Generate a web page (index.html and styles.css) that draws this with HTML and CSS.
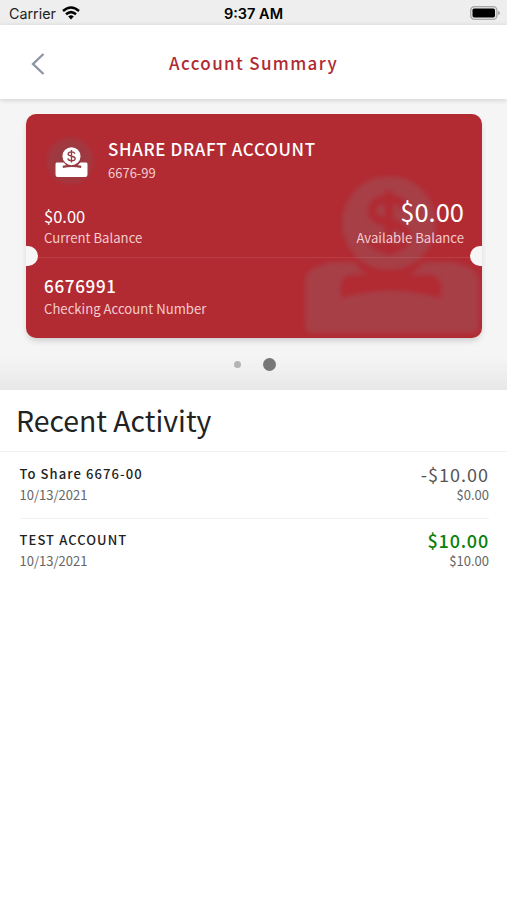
FILE: index.html
```html
<!DOCTYPE html>
<html lang="en">
<head>
<meta charset="utf-8">
<meta name="viewport" content="width=device-width, initial-scale=1">
<title>Account Summary</title>
<link rel="stylesheet" href="styles.css">
</head>
<body>
<header class="status">
  <div class="carrier"><span>Carrier</span>
    <svg class="wifi" viewBox="0 0 18 14" fill="none" stroke="#000" stroke-width="2.5"><path d="M1 5Q9-2 17 5M4 8.3q5-4.3 10 0"/><path d="M6.2 10.5q2.8-2.4 5.6 0L9 13.6z" fill="#000" stroke="none"/></svg>
  </div>
  <div class="time">9:37 AM</div>
  <svg class="battery" viewBox="0 0 30 14"><rect x=".7" y=".7" width="26.2" height="12.6" rx="3.6" fill="#e4e4e4" stroke="#a8a8a8" stroke-width="1.3"/><rect x="2.5" y="2.5" width="22.5" height="9" rx="1.8"/><path d="M28 4.8q2 1 2 2.2t-2 2.2z" fill="#a8a8a8"/></svg>
</header>
<nav class="header">
  <svg class="back" viewBox="0 0 14 22" fill="none" stroke="#8b94a5" stroke-width="2.3"><path d="M12.5 1 2 11l10.500 10"/></svg>
  <h1>Account Summary</h1>
</nav>
<section class="carousel">
  <article class="card">
    <svg class="watermark" viewBox="0 0 174 158">
      <circle cx="84" cy="46" r="47"/>
      <path class="cut" d="M84 14v64M101 32q-4-10-17-10c-11 0-17 5-17 12 0 8 8 10 17 12s18 5 18 13-8 13-18 13-17-4-18-12" stroke-width="8"/>
      <path d="M50 85H28C10 88 0 94 0 104v44q0 8 8 8h158q8 0 8-8v-44c0-10-10-16-28-19h-28q-7 10-16 13h25q9 3 9 11v12q-52-15-100 0v-12q0-8 9-11h19q-9-4-14-13z"/>
    </svg>
    <div class="top">
      <div class="head">
        <div class="badge"><svg viewBox="0 0 34 32"><path d="M1.500 16H9q2 3 5 4h7q3-1 5-4h6.500q1 0 1 2v10q0 3-3 3h-27q-3 0-3-3V18q0-2 1-2z"/><path class="cut" d="M8 20.500q9.500-2 19 0" stroke-width="2.200"/><circle cx="17" cy="9.500" r="9.300"/><path class="cut" d="M17 3v13M20.500 7q-.7-2-3.500-2c-2 0-3.500.8-3.500 2.300 0 3.200 7.300 1.200 7.300 4.500 0 1.500-1.700 2.400-3.800 2.400-2.300 0-3.500-1-3.800-2.400" stroke-width="1.400"/></svg></div>
        <div>
          <h2>SHARE DRAFT ACCOUNT</h2>
          <div class="suffix">6676-99</div>
        </div>
      </div>
      <div class="balances">
        <div><div class="current">$0.00</div><div class="label">Current Balance</div></div>
        <div class="right"><div class="available">$0.00</div><div class="label">Available Balance</div></div>
      </div>
    </div>
    <div class="bottom">
      <div class="number">6676991</div>
      <div class="label">Checking Account Number</div>
    </div>
    <i class="notch left"></i><i class="notch end"></i>
  </article>
  <div class="dots"><i></i><i class="active"></i></div>
</section>
<main>
  <h3>Recent Activity</h3>
  <div class="list">
    <div class="row">
      <div><div class="name">To Share 6676-00</div><div class="sub">10/13/2021</div></div>
      <div class="right"><div class="amount">-$10.00</div><div class="sub">$0.00</div></div>
    </div>
    <div class="row">
      <div><div class="name">TEST ACCOUNT</div><div class="sub">10/13/2021</div></div>
      <div class="right"><div class="amount credit">$10.00</div><div class="sub">$10.00</div></div>
    </div>
  </div>
</main>
</body>
</html>
```
FILE: styles.css
```css
* { box-sizing: border-box; }
body { margin: 0; background: #fff; color: #222; font-family: "Noto Sans CJK SC", sans-serif; }
h1, h2, h3 { margin: 0; font-weight: 500; }
svg { display: block; }
.right { text-align: right; }
.cut { fill: none; stroke: #b22a32; }

.status { height: 25px; background: #eee; display: grid; grid-template-columns: 1fr auto 1fr; align-items: center; padding: 2px 7px 0 9px; font: 14.300px/20px Inter, sans-serif; color: #222; }
.carrier { display: flex; align-items: center; gap: 6px; }
.wifi { width: 18px; height: 14px; margin-top: -2px; }
.time { margin-left: -2px; font-size: 14.500px; font-weight: 600; color: #000; }
.battery { width: 30px; height: 14px; margin-top: -2px; justify-self: end; }

.header { height: 74px; background: #fff; display: grid; grid-template-columns: 1fr auto 1fr; align-items: center; padding: 2px 31px 0; position: relative; box-shadow: 0 1px 5px rgba(0,0,0,.16); }
.back { width: 14px; height: 22px; margin-top: 1px; }
h1 { font-size: 17px; line-height: 24px; letter-spacing: 1.35px; color: #b02a33; }

.carousel { height: 291px; padding: 15px 25px 0 26px; background: linear-gradient(#f5f5f5 88%, #e8e8e8); }
.card { position: relative; height: 224px; border-radius: 10px; background: #b22a32; color: #fff; box-shadow: 0 4px 7px -2px rgba(0,0,0,.2); }
.watermark { position: absolute; left: 279px; top: 63px; width: 174px; height: 158px; fill: #8f7078; opacity: .3; filter: blur(2.5px); }
.top { position: relative; height: 144px; padding: 21px 18px 0; border-bottom: 1px solid rgba(255,255,255,.1); }
.head { display: flex; gap: 12px; height: 66px; }
.badge { width: 52px; height: 52px; border-radius: 50%; background: radial-gradient(#963c42 25%, #a4373f 55%, #b22a32 72%); display: grid; place-items: center; }
.badge svg { width: 33px; height: 31px; margin: 3px 0 0 2px; fill: #fff; }
.badge .cut { stroke: #963c42; }
h2 { font-size: 17px; line-height: 28px; letter-spacing: .65px; }
.suffix { font-size: 13px; line-height: 20px; color: #f3cccf; }
.balances { display: flex; justify-content: space-between; align-items: flex-end; height: 47px; }
.current { font-size: 16.500px; line-height: 24px; }
.available { font-size: 25.500px; line-height: 34px; }
.label { font-size: 13.150px; line-height: 20px; color: #f3cccf; }
.bottom { position: relative; padding: 16px 18px 0; }
.number { font-size: 17px; font-weight: 500; line-height: 24px; letter-spacing: .7px; }
.bottom .number { line-height: 23px; }
.bottom .label { line-height: 23px; }
.notch { position: absolute; top: 132px; width: 12px; height: 20px; background: #f6f6f6; }
.notch.left { left: 0; border-radius: 0 10px 10px 0; }
.notch.end { right: 0; border-radius: 10px 0 0 10px; }
.dots { display: flex; justify-content: center; align-items: center; gap: 22px; height: 52px; padding-left: 2px; }
.dots i { width: 7px; height: 7px; border-radius: 50%; background: #b4b4b4; }
.dots .active { width: 13px; height: 13px; background: #777; }

h3 { height: 61px; padding-left: 16px; font-size: 28.400px; font-weight: 400; line-height: 59px; color: #222; }
.list { border-top: 1px solid #f2f2f2; padding: 0 18px 0 19.500px; }
.row { display: flex; justify-content: space-between; height: 67px; padding-top: 11px; border-bottom: 1px solid #f3f3f3; }
.row:last-child { border: 0; padding-top: 10px; }
.name { font-size: 13px; font-weight: 500; line-height: 22px; letter-spacing: 1.080px; color: #222; }
.sub { font-size: 13px; line-height: 20px; color: #666; }
.amount { font-size: 18px; line-height: 22px; letter-spacing: 1px; color: #555; }
.credit { color: #0b810b; font-weight: 500; letter-spacing: .8px; }
```
